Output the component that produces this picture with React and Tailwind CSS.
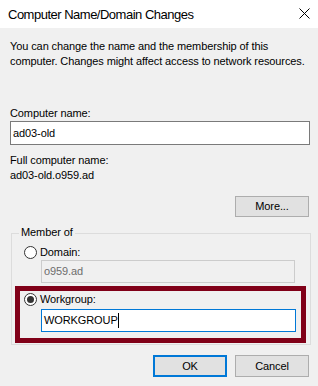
import React from 'react';

const Radio = ({ checked }) => (
  <span className="w-[13px] h-[13px] rounded-full border border-[#333333] bg-white flex items-center justify-center shrink-0">
    {checked && <span className="w-[7px] h-[7px] rounded-full bg-[#333333]" />}
  </span>
);

const App = () => {
  return (
    <div className="w-[318px] h-[386px] bg-[#f0f0f0] text-[11px] leading-[15px] tracking-[-0.1px] text-black font-['Liberation_Sans',Arial,sans-serif] overflow-hidden">
      {/* Title bar */}
      <div className="h-[28px] bg-white flex items-center justify-between pl-[8px] pr-[8px]">
        <span className="text-[13px] leading-[18px] tracking-[-0.5px] mt-[2px]">Computer Name/Domain Changes</span>
        <svg width="11" height="11" viewBox="0 0 11 11" className="mb-[1px]">
          <path d="M0.5 0.5 L10.5 10.5 M10.5 0.5 L0.5 10.5" stroke="#000" strokeWidth="1" />
        </svg>
      </div>

      <div className="px-[10px]">
        <p className="mt-[11px] whitespace-nowrap">
          You can change the name and the membership of this<br />
          computer. Changes might affect access to network resources.
        </p>

        <div className="mt-[37px]">Computer name:</div>
        <div className="h-[24px] w-[300px] border border-[#7a7a7a] bg-white flex items-center pl-[2px]">
          ad03-old
        </div>

        <div className="mt-[8px]">Full computer name:</div>
        <div>ad03-old.o959.ad</div>

        <div className="flex justify-end mt-[13px]">
          <button className="w-[74px] h-[21px] border border-[#adadad] bg-[#e1e1e1] text-[11px] leading-[15px] mr-[-1px]">
            More...
          </button>
        </div>
      </div>

      {/* Member of group */}
      <div className="relative mt-[16px] ml-[11px] w-[300px] h-[112px] border border-[#dcdcdc]">
        <span className="absolute -top-[9px] left-[7px] px-[2px] bg-[#f0f0f0]">Member of</span>

        <div className="pt-[11px] pl-[12px] flex items-center gap-[3px]">
          <Radio />
          <span>Domain:</span>
        </div>
        <div className="ml-[29px] w-[254px] h-[23px] border border-[#cccccc] bg-[#f0f0f0] text-[#6d6d6d] flex items-center pl-[2px]">
          o959.ad
        </div>

        <div className="mt-[3px] ml-[3px] w-[291px] h-[57px] border-[5px] border-[#800018]">
          <div className="pl-[4px] pt-[1px] flex items-center gap-[3px]">
            <Radio checked />
            <span>Workgroup:</span>
          </div>
          <div className="mt-[2px] ml-[21px] w-[255px] h-[23px] border border-[#0078d7] bg-white flex items-center pl-[2px]">
            <span>WORKGROUP</span>
            <span className="w-[1px] h-[15px] bg-black" />
          </div>
        </div>
      </div>

      <div className="flex justify-end gap-[8px] mt-[10px] pr-[9px]">
        <button className="w-[74px] h-[22px] border-2 border-[#0078d7] bg-[#e1e1e1] text-[11px] leading-[15px]">
          OK
        </button>
        <button className="w-[74px] h-[22px] border border-[#adadad] bg-[#e1e1e1] text-[11px] leading-[15px]">
          Cancel
        </button>
      </div>
    </div>
  );
};

export default App;
